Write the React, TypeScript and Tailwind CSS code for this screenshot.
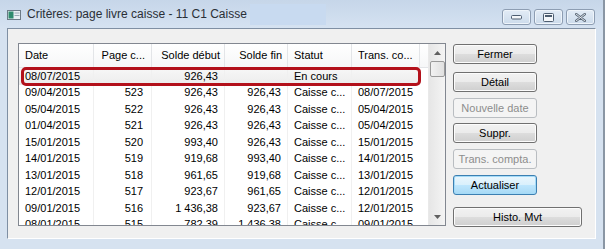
import React from 'react';

type Row = {
  date: string;
  page: string;
  debut: string;
  fin: string;
  statut: string;
  trans: string;
};

const rows: Row[] = [
  { date: '08/07/2015', page: '', debut: '926,43', fin: '', statut: 'En cours', trans: '' },
  { date: '09/04/2015', page: '523', debut: '926,43', fin: '926,43', statut: 'Caisse c...', trans: '08/07/2015' },
  { date: '05/04/2015', page: '522', debut: '926,43', fin: '926,43', statut: 'Caisse c...', trans: '05/04/2015' },
  { date: '01/04/2015', page: '521', debut: '926,43', fin: '926,43', statut: 'Caisse c...', trans: '05/04/2015' },
  { date: '15/01/2015', page: '520', debut: '993,40', fin: '926,43', statut: 'Caisse c...', trans: '15/01/2015' },
  { date: '14/01/2015', page: '519', debut: '919,68', fin: '993,40', statut: 'Caisse c...', trans: '14/01/2015' },
  { date: '13/01/2015', page: '518', debut: '961,65', fin: '919,68', statut: 'Caisse c...', trans: '13/01/2015' },
  { date: '12/01/2015', page: '517', debut: '923,67', fin: '961,65', statut: 'Caisse c...', trans: '12/01/2015' },
  { date: '09/01/2015', page: '516', debut: '1 436,38', fin: '923,67', statut: 'Caisse c...', trans: '12/01/2015' },
  { date: '08/01/2015', page: '515', debut: '782,39', fin: '1 436,38', statut: 'Caisse c...', trans: '09/01/2015' },
];

function WinButton({ children, w = 'w-[84px]', kind = 'normal' }: { children: React.ReactNode; w?: string; kind?: 'normal' | 'disabled' | 'default' }) {
  const styles =
    kind === 'disabled'
      ? 'border-[#b9bdc1] bg-[#f4f4f4] text-[#8d8d8d]'
      : kind === 'default'
        ? 'border-[#3c7fb1] bg-[linear-gradient(#eaf6fd_0%,#d9f0fc_50%,#bee6fd_51%,#a7d9f5_100%)] text-black shadow-[inset_0_0_0_1px_#a4dbf8]'
        : 'border-[#707070] bg-[linear-gradient(#f2f2f2_0%,#ebebeb_50%,#dddddd_51%,#cfcfcf_100%)] text-black shadow-[inset_0_0_0_1px_#fcfcfc]';
  return (
    <div className={`${w} h-[20px] rounded-[3px] border flex items-center justify-center text-[11px] leading-none ${styles}`}>
      {children}
    </div>
  );
}

function CaptionButton({ children }: { children: React.ReactNode }) {
  return (
    <div className="w-[29px] h-[16px] rounded-[3px] border border-[#8d9db2] bg-[linear-gradient(#e3ecf6,#ccdbeb)] shadow-[inset_0_0_0_1px_#eef4fa] flex items-center justify-center">
      {children}
    </div>
  );
}

export default function App() {
  return (
    <div className="relative w-[605px] h-[249px] overflow-hidden bg-[#d6e2f0] font-['Liberation_Sans',Arial,sans-serif] text-black">
      {/* title bar */}
      <div className="h-[28px] flex items-center bg-[linear-gradient(#c6d6e9,#d5e2f1)] pr-[10px]">
        <svg className="ml-[7px] mt-[1px]" width="14" height="10" viewBox="0 0 14 10">
          <rect x="0.5" y="0.5" width="13" height="9" fill="#e8eef2" stroke="#6c7a86" />
          <rect x="1.5" y="1.5" width="5" height="7" fill="#2f8a6c" />
          <rect x="7.5" y="2.5" width="5" height="1" fill="#9aa8b3" />
          <rect x="7.5" y="5" width="5" height="1" fill="#9aa8b3" />
        </svg>
        <span className="ml-[6px] text-[12px] text-[#2a2f36] whitespace-nowrap">Critères: page livre caisse - 11 C1 Caisse</span>
        <div className="ml-[3px] w-[76px] h-[21px] bg-[#c8daf0]" />
        <div className="ml-auto flex gap-[3px] mt-[6px]">
          <CaptionButton>
            <svg width="11" height="6" viewBox="0 0 11 6">
              <rect x="0.5" y="1.5" width="10" height="3.5" rx="1" fill="#f4f7fa" stroke="#4d5d70" />
            </svg>
          </CaptionButton>
          <CaptionButton>
            <svg width="11" height="9" viewBox="0 0 11 9">
              <rect x="0.5" y="0.5" width="10" height="8" rx="1" fill="#f4f7fa" stroke="#4d5d70" />
              <rect x="2" y="2" width="7" height="2" fill="#4d5d70" />
            </svg>
          </CaptionButton>
          <CaptionButton>
            <svg width="11" height="9" viewBox="0 0 11 9">
              <path d="M1 1 L10 8 M10 1 L1 8" stroke="#5a6878" strokeWidth="2.4" strokeLinecap="round" />
              <path d="M1 1 L10 8 M10 1 L1 8" stroke="#eef2f6" strokeWidth="0.9" strokeLinecap="round" />
            </svg>
          </CaptionButton>
        </div>
      </div>

      {/* client area */}
      <div className="ml-[7px] w-[589px] h-[211px] bg-[#f0f0f0] border-t border-l border-[#7f8fa3] border-r border-b border-r-white border-b-white flex">
        {/* list box */}
        <div className="ml-[10px] mt-[14px] w-[428px] h-[183px] border border-[#828790] bg-white flex overflow-hidden">
          <div className="w-[409px] h-full overflow-hidden">
            <div className="h-[24px] flex border-b border-[#e3e5e8] bg-[linear-gradient(#ffffff,#f6f7f8)] text-[11px]">
              <div className="w-[75px] pl-[6px] flex items-center border-r border-[#e3e5e8]">Date</div>
              <div className="w-[58px] pr-[6px] flex items-center justify-end border-r border-[#e3e5e8]">Page c...</div>
              <div className="w-[73px] pr-[4px] flex items-center justify-end border-r border-[#e3e5e8]">Solde début</div>
              <div className="w-[63px] pr-[5px] flex items-center justify-end border-r border-[#e3e5e8]">Solde fin</div>
              <div className="w-[64px] pl-[6px] flex items-center border-r border-[#e3e5e8]">Statut</div>
              <div className="w-[68px] pl-[6px] flex items-center border-r border-[#e3e5e8] whitespace-nowrap">Trans. co...</div>
            </div>
            {rows.map((r, i) => (
              <div key={i} className={`h-[16.5px] flex text-[11px] leading-none whitespace-nowrap ${i === 0 ? 'bg-[linear-gradient(#f7f7f7,#ececec)] w-[401px]' : ''}`}>
                <div className="w-[75px] pl-[6px] flex items-center border-r border-[#f0f0f0]">{r.date}</div>
                <div className="w-[58px] pr-[8px] flex items-center justify-end border-r border-[#f0f0f0]">{r.page}</div>
                <div className="w-[73px] pr-[6px] flex items-center justify-end border-r border-[#f0f0f0]">{r.debut}</div>
                <div className="w-[63px] pr-[6px] flex items-center justify-end border-r border-[#f0f0f0]">{r.fin}</div>
                <div className="w-[64px] pl-[6px] flex items-center border-r border-[#f0f0f0]">{r.statut}</div>
                <div className="w-[68px] pl-[6px] flex items-center">{r.trans}</div>
              </div>
            ))}
          </div>
          {/* scrollbar */}
          <div className="w-[17px] h-full bg-[linear-gradient(90deg,#e6e6e6,#f4f4f4)] border-l border-[#e9e9e9] flex flex-col items-center">
            <div className="h-[17px] flex items-center justify-center">
              <svg width="7" height="4" viewBox="0 0 7 4"><path d="M0 4 L3.5 0 L7 4 Z" fill="#606060" /></svg>
            </div>
            <div className="w-[15px] h-[16px] rounded-[2px] border border-[#9a9a9a] bg-[linear-gradient(90deg,#f2f2f2,#e0e0e0)]" />
            <div className="mt-auto h-[17px] flex items-center justify-center">
              <svg width="7" height="4" viewBox="0 0 7 4"><path d="M0 0 L7 0 L3.5 4 Z" fill="#606060" /></svg>
            </div>
          </div>
        </div>

        {/* buttons */}
        <div className="ml-[7px] mt-[15px] flex flex-col">
          <WinButton>Fermer</WinButton>
          <div className="mt-[8px]"><WinButton>Détail</WinButton></div>
          <div className="mt-[6px]"><WinButton kind="disabled">Nouvelle date</WinButton></div>
          <div className="mt-[5px]"><WinButton>Suppr.</WinButton></div>
          <div className="mt-[6px]"><WinButton kind="disabled">Trans. compta.</WinButton></div>
          <div className="mt-[6px]"><WinButton kind="default">Actualiser</WinButton></div>
          <div className="mt-[12px]"><WinButton w="w-[129px]">Histo. Mvt</WinButton></div>
        </div>
      </div>

      {/* right window edge */}
      <div className="absolute right-0 top-0 w-[2px] h-full bg-[#8a96a4]" />

      {/* annotation around current row */}
      <div className="absolute left-[21px] top-[67px] w-[400px] h-[19px] rounded-[5px] border-[3px] border-[#b3111b]" />
    </div>
  );
}
